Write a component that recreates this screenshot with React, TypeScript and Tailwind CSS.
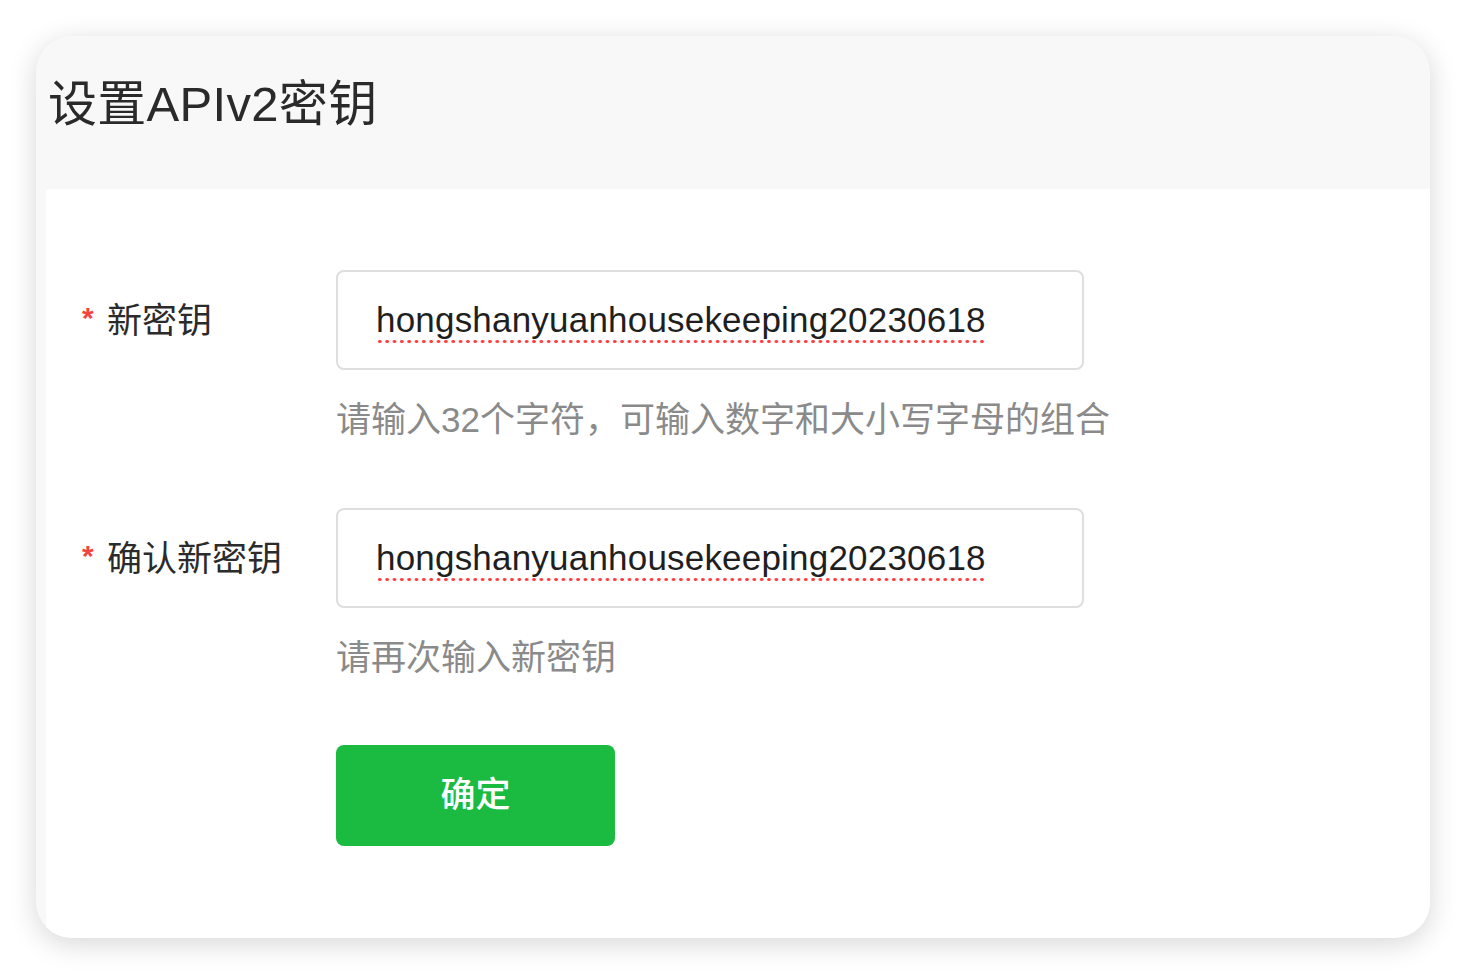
import React from "react";

const font = "font-['Liberation_Sans','Noto_Sans_CJK_SC',sans-serif]";

function Field({ label, value, hint }: { label: string; value: string; hint: string }) {
  return (
    <div className="flex">
      <div className="w-[254px] h-[100px] flex items-center shrink-0">
        <span className="text-[#f5433f] text-[30px] font-bold leading-none w-[25px] -mt-[4px]">*</span>
        <span className="text-[35px] leading-none text-[#2b2b2b]">{label}</span>
      </div>
      <div className="flex flex-col">
        <div className="w-[748px] h-[100px] border-2 border-[#dedede] rounded-[8px] pl-[38px] flex items-center">
          <span className="inline-block text-[35px] leading-[40px] text-[#1f1f1f] tracking-[0.2px] pb-[4px] mt-[4px] bg-[radial-gradient(circle,#ff4040_1.5px,transparent_1.9px)] bg-[length:7.35px_5px] bg-repeat-x bg-bottom">
            {value}
          </span>
        </div>
        <div className="mt-[28px] text-[35px] leading-[44px] text-[#8a8a8a]">{hint}</div>
      </div>
    </div>
  );
}

export default function App() {
  return (
    <div className={`w-full h-[974px] bg-white pt-[36px] pl-[36px] ${font}`}>
      <div className="w-[1394px] h-[902px] rounded-[36px] bg-[#f8f8f8] shadow-[0_6px_28px_rgba(0,0,0,0.16)] overflow-hidden flex flex-col">
        <div className="h-[153px] shrink-0 pl-[12px] pt-[40px]">
          <h1 className="text-[49px] leading-[56px] text-[#2a2a2a] tracking-[0.3px]">设置APIv2密钥</h1>
        </div>
        <div className="flex-1 ml-[10px] bg-white rounded-tl-[4px] pl-[36px] pt-[81px] flex flex-col">
          <Field label="新密钥" value="hongshanyuanhousekeeping20230618" hint="请输入32个字符，可输入数字和大小写字母的组合" />
          <div className="h-[66px]" />
          <Field label="确认新密钥" value="hongshanyuanhousekeeping20230618" hint="请再次输入新密钥" />
          <div className="pl-[254px] mt-[65px]">
            <button className="w-[279px] h-[101px] rounded-[8px] bg-[#1bbb42] text-white text-[35px] font-medium flex items-center justify-center">
              确定
            </button>
          </div>
        </div>
      </div>
    </div>
  );
}
